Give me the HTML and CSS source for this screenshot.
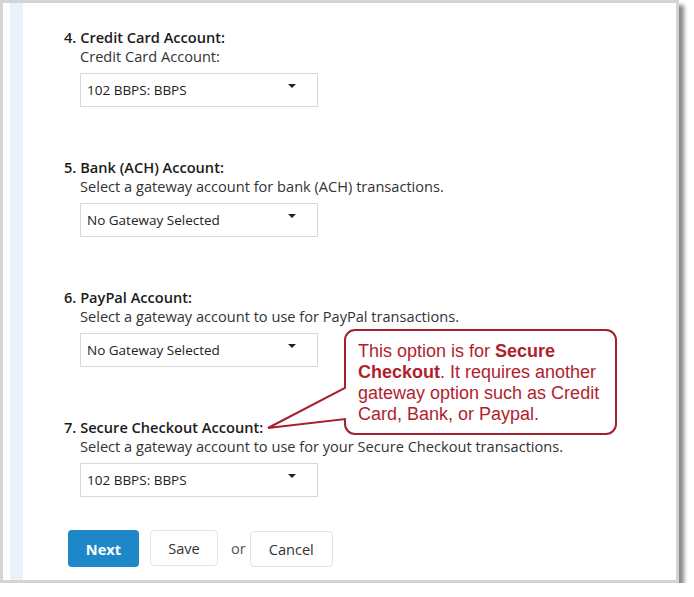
FILE: index.html
```html
<!DOCTYPE html>
<html lang="en">
<head>
    <meta charset="UTF-8">
    <title>Gateway Accounts</title>
    <link rel="stylesheet" href="styles.css">
</head>
<body>
    <div class="frame">
        <div class="side-strip"></div>
        <div class="form">
            <div class="field">
                <div class="field-title">4. Credit Card Account:</div>
                <div class="field-help">Credit Card Account:</div>
                <div class="dropdown"><span>102 BBPS: BBPS</span><span class="caret"></span></div>
            </div>
            <div class="field">
                <div class="field-title">5. Bank (ACH) Account:</div>
                <div class="field-help">Select a gateway account for bank (ACH) transactions.</div>
                <div class="dropdown"><span>No Gateway Selected</span><span class="caret"></span></div>
            </div>
            <div class="field">
                <div class="field-title">6. PayPal Account:</div>
                <div class="field-help">Select a gateway account to use for PayPal transactions.</div>
                <div class="dropdown"><span>No Gateway Selected</span><span class="caret"></span></div>
            </div>
            <div class="field field-last">
                <div class="field-title">7. Secure Checkout Account:</div>
                <div class="field-help">Select a gateway account to use for your Secure Checkout transactions.</div>
                <div class="dropdown"><span>102 BBPS: BBPS</span><span class="caret"></span></div>
            </div>
            <div class="actions">
                <button class="btn btn-primary">Next</button>
                <button class="btn btn-save">Save</button>
                <span class="or">or</span>
                <button class="btn btn-cancel">Cancel</button>
            </div>
        </div>

        <!-- annotation callout -->
        <div class="callout">
            <svg class="callout-shape" width="354" height="112" viewBox="0 0 354 112">
                <path d="M89,3 H340 A10,10 0 0 1 350,13 V97 A10,10 0 0 1 340,107 H89 A10,10 0 0 1 79,97 V92 L2,101 L79,61 V13 A10,10 0 0 1 89,3 Z"
                      fill="#fff" stroke="#a3202f" stroke-width="2" stroke-linejoin="miter"/>
            </svg>
            <div class="callout-text">
                <div>This option is for <b>Secure</b></div>
                <div><b>Checkout</b>. It requires another</div>
                <div>gateway option such as Credit</div>
                <div>Card, Bank, or Paypal.</div>
            </div>
        </div>
    </div>
</body>
</html>
```

FILE: styles.css
```css
body {
    margin: 0;
    background-color: #fff;
    font-family: "Open Sans", Arial, sans-serif;
}

.frame {
    position: relative;
    box-sizing: border-box;
    width: 679px;
    height: 583px;
    border: 3px solid #d4d4d4;
    background-color: #fff;
    box-shadow: 5px 5px 4px #8a8a8a;
    display: flex;
}

.side-strip {
    width: 13px;
    margin-left: 7px;
    background-color: #e8f2fd;
}

.form {
    padding: 25px 0 0 41px;
}

.field {
    margin-bottom: 51px;
}

.field-last {
    margin-bottom: 33px;
}

.field-title {
    font-size: 14.6px;
    line-height: 19px;
    font-weight: 600;
    color: #1b1b1b;
}

.field-help {
    font-size: 14.6px;
    line-height: 19px;
    color: #333;
    padding-left: 16px;
}

.dropdown {
    box-sizing: border-box;
    width: 238px;
    height: 34px;
    margin: 7px 0 0 16px;
    padding: 0 21px 0 6px;
    border: 1px solid #d9d9d9;
    display: flex;
    align-items: center;
    justify-content: space-between;
    font-size: 13.5px;
    color: #222;
}

.caret {
    align-self: flex-start;
    margin-top: 10px;
    width: 0;
    height: 0;
    border-left: 4px solid transparent;
    border-right: 4px solid transparent;
    border-top: 4px solid #222;
}

.actions {
    display: flex;
    align-items: flex-start;
    margin-left: 4px;
}

.btn {
    box-sizing: border-box;
    height: 36px;
    border-radius: 4px;
    font-family: "Open Sans", Arial, sans-serif;
    font-size: 14.6px;
    padding: 0;
    cursor: pointer;
}

.btn-primary {
    width: 71px;
    height: 37px;
    border: none;
    background-color: #1e87c8;
    color: #fff;
    font-weight: 700;
}

.btn-save {
    width: 68px;
    margin-left: 11px;
    border: 1px solid #e2e2e2;
    background-color: #fff;
    color: #333;
}

.or {
    margin: 0 4px 0 13px;
    line-height: 37px;
    font-size: 14.6px;
    color: #555;
}

.btn-cancel {
    width: 83px;
    margin-top: 1px;
    border: 1px solid #e2e2e2;
    background-color: #fff;
    color: #333;
}

.callout {
    position: absolute;
    left: 263px;
    top: 324px;
    width: 354px;
    height: 112px;
}

.callout-shape {
    position: absolute;
    left: 0;
    top: 0;
}

.callout-text {
    position: relative;
    margin: 14px 0 0 92px;
    width: 252px;
    font-family: "Liberation Sans", Arial, sans-serif;
    font-size: 18px;
    line-height: 21px;
    color: #b01e2e;
}
```
